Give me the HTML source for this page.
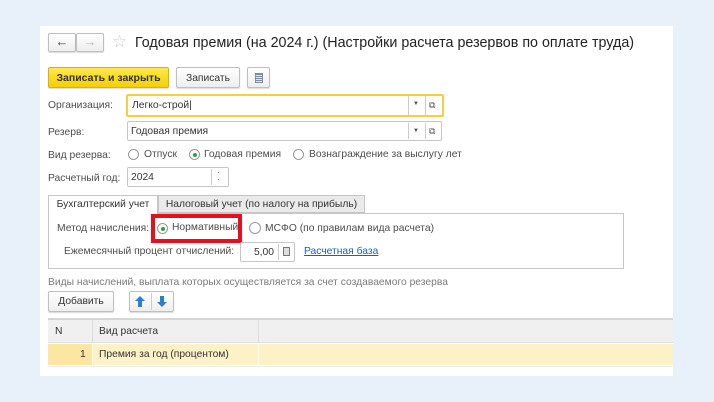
<!DOCTYPE html>
<html><head><meta charset="utf-8"><style>
*{box-sizing:border-box;margin:0;padding:0}
body{width:714px;height:402px;background:#e8f1fa;font-family:"Liberation Sans",Arial,sans-serif;font-size:10.3px;color:#4d4d4d;position:relative;overflow:hidden}
.a{position:absolute;white-space:nowrap}
#p{position:absolute;left:40px;top:26px;width:633px;height:350px;background:#fff}
.btn{position:absolute;border:1px solid #bfbfbf;border-radius:2px;background:linear-gradient(#fff,#eee);box-shadow:0 1px 1px rgba(0,0,0,.15);text-align:center;color:#333}
.inp{position:absolute;border:1px solid #c6c6c6;border-radius:2px;background:#fff;color:#333;padding-left:3px}
.rad{position:absolute;width:11px;height:11px;border:1px solid #999;border-radius:50%;background:#fff}
.rad.on::after{content:"";position:absolute;left:3px;top:3px;width:4px;height:4px;border-radius:50%;background:#2aa24a}
.sep{position:absolute;top:2px;bottom:2px;width:1px;background:#ccc}
</style></head><body>
<div id="p"></div>
<div class="btn" style="left:48px;top:33px;width:28px;height:19px;line-height:16px;font-size:13px;color:#444">&#8592;</div>
<div class="btn" style="left:76px;top:33px;width:28px;height:19px;line-height:16px;font-size:13px;color:#bbb">&#8594;</div>
<div class="a" style="left:112px;top:32px;font-size:17px;color:#ccc">&#9734;</div>
<div class="a" style="left:135px;top:35px;font-size:14.3px;color:#222">Годовая премия (на 2024 г.) (Настройки расчета резервов по оплате труда)</div>
<div class="btn" style="left:48px;top:67px;width:121px;height:21px;line-height:21px;background:linear-gradient(#ffe84d,#f4cf00);border-color:#d8b400;color:#333;font-weight:bold;font-size:10.5px">Записать и закрыть</div>
<div class="btn" style="left:176px;top:67px;width:64px;height:21px;line-height:21px">Записать</div>
<div class="btn" style="left:247px;top:67px;width:23px;height:21px"><div style="position:absolute;left:7px;top:5px;width:8px;height:10px;background:repeating-linear-gradient(#7a8ea8 0 1px,#dbe3ee 1px 2px);border:1px solid #7a8ea8"></div></div>
<div class="a" style="left:48px;top:100px">Организация:</div>
<div class="inp" style="left:126px;top:94px;width:318px;height:23px;border:2px solid #f5cf3d;line-height:20px;padding-left:4px">Легко-строй|</div>
<div class="sep" style="left:408px;top:96px;height:19px"></div>
<div class="a" style="left:413px;top:101px;font-size:6px">&#9660;</div>
<div class="sep" style="left:425px;top:96px;height:19px"></div>
<div class="a" style="left:429px;top:100px;font-size:9px;color:#555">&#10697;</div>
<div class="a" style="left:48px;top:127px">Резерв:</div>
<div class="inp" style="left:127px;top:121px;width:315px;height:20px;line-height:20px">Годовая премия</div>
<div class="sep" style="left:408px;top:123px;height:16px"></div>
<div class="a" style="left:413px;top:128px;font-size:6px">&#9660;</div>
<div class="sep" style="left:425px;top:123px;height:16px"></div>
<div class="a" style="left:429px;top:126px;font-size:9px;color:#555">&#10697;</div>
<div class="a" style="left:48px;top:150px">Вид резерва:</div>
<div class="rad" style="left:128px;top:149px"></div><div class="a" style="left:144px;top:149px">Отпуск</div>
<div class="rad on" style="left:189px;top:149px"></div><div class="a" style="left:204px;top:149px">Годовая премия</div>
<div class="rad" style="left:293px;top:149px"></div><div class="a" style="left:309px;top:149px">Вознаграждение за выслугу лет</div>
<div class="a" style="left:48px;top:173px">Расчетный год:</div>
<div class="inp" style="left:127px;top:167px;width:102px;height:20px;line-height:20px">2024</div>
<div class="sep" style="left:211px;top:169px;height:16px"></div>
<div class="a" style="left:217px;top:169px;font-size:8px;line-height:7px">&middot;<br>&middot;</div>
<div class="a" style="left:48px;top:195px;width:110px;height:19px;border:1px solid #c6c6c6;border-bottom:none;background:#fff;text-align:center;line-height:18px;color:#333">Бухгалтерский учет</div>
<div class="a" style="left:158px;top:195px;width:207px;height:18px;border:1px solid #c6c6c6;background:#eaeaea;text-align:center;line-height:17px;color:#333">Налоговый учет (по налогу на прибыль)</div>
<div class="a" style="left:48px;top:213px;width:576px;height:56px;border:1px solid #c6c6c6;border-top:none"></div>
<div class="a" style="left:158px;top:213px;width:466px;height:1px;background:#c6c6c6"></div>
<div class="a" style="left:57px;top:223px">Метод начисления:</div>
<div class="a" style="left:151px;top:214px;width:91px;height:29px;border:4px solid #e5101c"></div>
<div class="rad on" style="left:157px;top:223px"></div><div class="a" style="left:172px;top:222px">Нормативный</div>
<div class="rad" style="left:249px;top:222px;width:12px;height:12px"></div><div class="a" style="left:265px;top:223px">МСФО (по правилам вида расчета)</div>
<div class="a" style="left:64px;top:246px">Ежемесячный процент отчислений:</div>
<div class="inp" style="left:240px;top:242px;width:55px;height:20px;line-height:19px;text-align:right;padding-right:20px">5,00</div>
<div class="sep" style="left:278px;top:244px;height:16px"></div>
<div class="a" style="left:283px;top:247px;width:7px;height:9px;border:1px solid #777;background:#ddd"></div>
<div class="a" style="left:304px;top:246px;color:#1a5fb4;text-decoration:underline">Расчетная база</div>
<div class="a" style="left:48px;top:277px;color:#7a7a7a">Виды начислений, выплата которых осуществляется за счет создаваемого резерва</div>
<div class="btn" style="left:48px;top:291px;width:66px;height:21px;line-height:20px">Добавить</div>
<div class="btn" style="left:129px;top:291px;width:45px;height:21px"></div>
<div class="sep" style="left:151px;top:293px;height:17px"></div>
<svg class="a" style="left:135px;top:296px" width="10" height="11" viewBox="0 0 10 11"><path d="M5 0L10 5H7V11H3V5H0Z" fill="#2a7fd4"/></svg>
<svg class="a" style="left:157px;top:296px" width="10" height="11" viewBox="0 0 10 11"><path d="M5 11L10 6H7V0H3V6H0Z" fill="#2a7fd4"/></svg>
<div class="a" style="left:48px;top:318px;width:625px;height:25px;background:#f0f0f0;border-top:2px solid #d5d5d5;border-bottom:1px solid #e0e0e0"></div>
<div class="a" style="left:92px;top:320px;width:1px;height:23px;background:#ddd"></div>
<div class="a" style="left:258px;top:320px;width:1px;height:23px;background:#ddd"></div>
<div class="a" style="left:55px;top:326px;color:#333">N</div>
<div class="a" style="left:99px;top:326px;color:#333">Вид расчета</div>
<div class="a" style="left:48px;top:344px;width:625px;height:21px;background:#fdf1c8"></div>
<div class="a" style="left:48px;top:344px;width:44px;height:21px;background:#fbe6a2"></div>
<div class="a" style="left:92px;top:344px;width:1px;height:21px;background:#fff"></div>
<div class="a" style="left:258px;top:344px;width:1px;height:21px;background:#fff"></div>
<div class="a" style="left:80px;top:349px;color:#333">1</div>
<div class="a" style="left:99px;top:349px;color:#333">Премия за год (процентом)</div>
<div class="a" style="left:48px;top:366px;width:625px;height:1px;background:#eee"></div>
</body></html>
